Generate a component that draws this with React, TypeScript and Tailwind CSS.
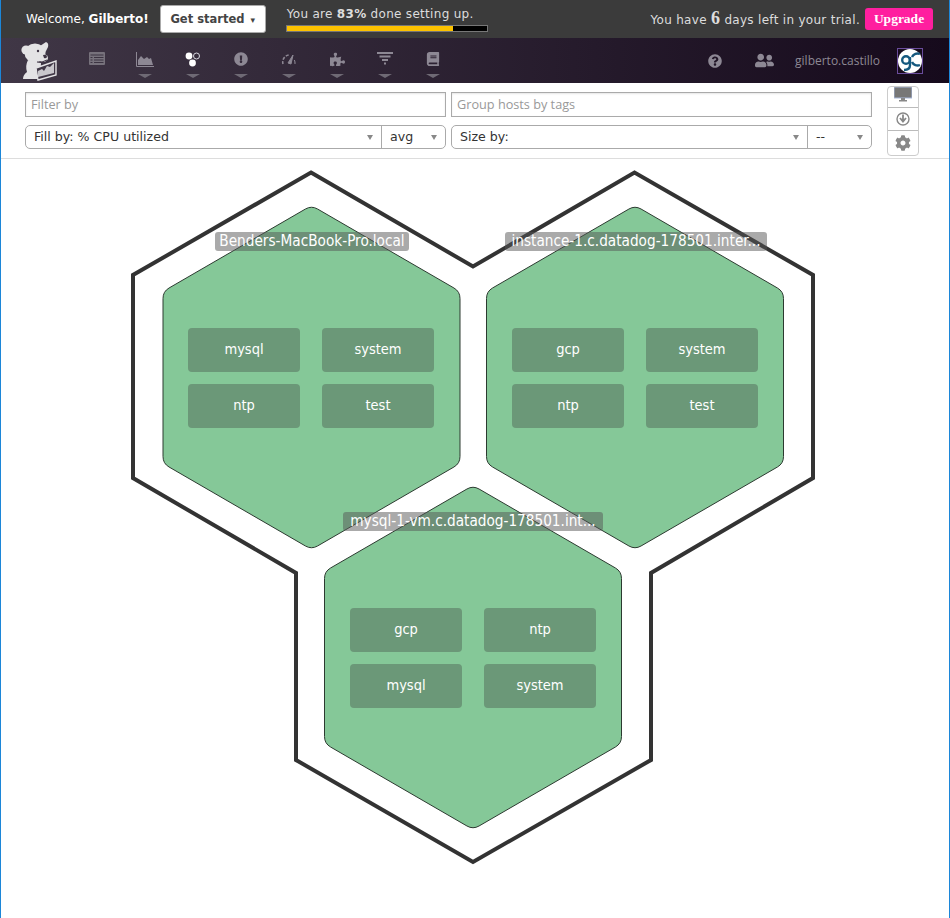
import { FaBook, FaCog, FaExclamationCircle, FaPuzzlePiece, FaQuestionCircle, FaUserFriends } from "react-icons/fa";
import type { ReactNode } from "react";

const hosts = [
  { label: "Benders-MacBook-Pro.local", labelClass: "left-[214px] top-[232px] w-[194px]", left: 188, top: 328, tags: ["mysql", "system", "ntp", "test"] },
  { label: "instance-1.c.datadog-178501.inter...", labelClass: "left-[504px] top-[232px] w-[262px]", left: 512, top: 328, tags: ["gcp", "system", "ntp", "test"] },
  { label: "mysql-1-vm.c.datadog-178501.int...", labelClass: "left-[342px] top-[512px] w-[260px]", left: 350, top: 608, tags: ["gcp", "ntp", "mysql", "system"] },
];

// hexagon with rounded corners, pointy side up
function hexPath(cx: number, top: number) {
  const w = 148.5;
  const s = 86;
  const pts = [
    [cx, top],
    [cx + w, top + s],
    [cx + w, top + 3 * s],
    [cx, top + 4 * s],
    [cx - w, top + 3 * s],
    [cx - w, top + s],
  ];
  const r = 7;
  const along = (a: number[], b: number[]) => {
    const d = Math.hypot(b[0] - a[0], b[1] - a[1]);
    return [a[0] + ((b[0] - a[0]) * r) / d, a[1] + ((b[1] - a[1]) * r) / d];
  };
  return (
    pts
      .map((p, i) => {
        const from = along(p, pts[(i + 5) % 6]);
        const to = along(p, pts[(i + 1) % 6]);
        return `${i === 0 ? "M" : "L"}${from[0]} ${from[1]} Q${p[0]} ${p[1]} ${to[0]} ${to[1]}`;
      })
      .join(" ") + " Z"
  );
}

function NavIcon({ children, arrow = true }: { children: ReactNode; arrow?: boolean }) {
  return (
    <div className="relative flex h-[45px] w-12 items-start justify-center pt-[14px] text-[#8d8894]">
      {children}
      {arrow && <span className="absolute left-[17px] top-[36px] h-0 w-0 border-x-[7px] border-t-[4px] border-x-transparent border-t-[#6f6a75]" />}
    </div>
  );
}

function SelectArrow() {
  return <span className="h-0 w-0 border-x-[3.5px] border-t-[5px] border-x-transparent border-t-[#888]" />;
}

function SelectRow({ label, value }: { label: string; value: string }) {
  return (
    <div className="flex h-6 flex-1 rounded-[5px] border border-[#aaa] text-[12.6px] text-[#333]">
      <div className="flex flex-1 items-center justify-between pl-2 pr-[8px]">
        <span>{label}</span>
        <SelectArrow />
      </div>
      <div className="flex w-[64px] items-center justify-between border-l border-[#aaa] pl-2 pr-[8px]">
        <span>{value}</span>
        <SelectArrow />
      </div>
    </div>
  );
}

export default function App() {
  return (
    <div className="relative h-[918px] w-[950px] overflow-hidden border-x border-[#1c86d8] bg-white font-['DejaVu_Sans',sans-serif]">
      {/* Trial bar */}
      <div className="flex h-[38px] items-center bg-[#3b3b3b] pl-[25px] pr-4 text-[#ddd]">
        <span className="text-[12px] text-white">Welcome, <b>Gilberto!</b></span>
        <button className="ml-[11px] h-7 w-[106px] rounded-[3px] border border-[#aaa] bg-white pt-px text-[11.5px] font-bold text-[#444]">
          Get started <span className="ml-0.5 text-[9px]">▾</span>
        </button>
        <div className="ml-5 flex w-[202px] flex-col">
          <span className="pl-px text-[12px] leading-[15px] tracking-[0.3px]">You are <b>83%</b> done setting up.</span>
          <div className="mt-[3px] h-[7px] border border-[#777] bg-black">
            <div className="h-full w-[83%] bg-[#fcc200]" />
          </div>
        </div>
        <div className="ml-auto flex items-center">
          <span className="text-[12px] tracking-[0.3px]">You have <span className="font-['Liberation_Serif',serif] text-[18px] font-bold leading-none">6</span> days left in your trial.</span>
          <button className="ml-[5px] h-[22px] w-[68px] rounded-[3px] bg-[#ff1f9f] font-['Liberation_Serif',serif] text-[13.5px] font-bold text-white">Upgrade</button>
        </div>
      </div>

      {/* Main nav */}
      <div className="flex h-[45px] items-start bg-gradient-to-r from-[#403746] to-[#160a1c] pl-[19px]">
        <svg className="mt-[3px] h-[40px] w-[37px] shrink-0" viewBox="0 0 37 40">
          <circle cx="6" cy="9" r="4.6" fill="#e4e3e5" />
          <ellipse cx="15" cy="12" rx="10.5" ry="9.5" fill="#e4e3e5" />
          <path d="M20 5 L26 1 Q29 2 28 6 L25 12 L20 9Z" fill="#e4e3e5" />
          <ellipse cx="23" cy="17" rx="5" ry="4" fill="#e4e3e5" />
          <path d="M8 19 L21 22 L20 38 L3 38 Q3 34 7 31 Q5 25 8 19Z" fill="#e4e3e5" />
          <path d="M16 27 L36 20 L36 34 L18 39Z" fill="#403746" stroke="#e4e3e5" strokeWidth="1.4" />
          <path d="M18 36 L18 30 L22 28 L24 30 L27 25 L30 26 L34 22 L34 32Z" fill="#c9c7cc" />
          <circle cx="18" cy="10" r="1.2" fill="#403746" />
          <path d="M23 14 Q27 13 27 16 Q26 18 24 17Z" fill="#403746" />
          <path d="M17 21 Q22 22 27 19" fill="none" stroke="#403746" strokeWidth="1" />
        </svg>
        <div className="ml-[16px] flex">
          <NavIcon arrow={false}>
            <svg width="16" height="13" viewBox="0 0 16 13"><rect width="16" height="13" rx="1" fill="#77727c" /><path d="M1.5 3h13M1.5 5.5h2M5 5.5h9.5M1.5 8h2M5 8h9.5M1.5 10.5h2M5 10.5h9.5" stroke="#3c3442" strokeWidth="1" /></svg>
          </NavIcon>
          <NavIcon>
            <svg width="18" height="15" viewBox="0 0 18 15"><path d="M.5 0v14.5H18" stroke="#8d8894" fill="none" /><path d="M2 13V8l3-4 3 3 3-2 2 2 2-1 2 7Z" fill="#8d8894" /></svg>
          </NavIcon>
          <NavIcon>
            <svg width="16" height="15" viewBox="0 0 16 15"><circle cx="4" cy="4" r="3.4" fill="#fff" /><circle cx="11.5" cy="4" r="3" fill="none" stroke="#d8d8e0" strokeWidth="1" /><circle cx="7.5" cy="11" r="3.4" fill="#fff" /></svg>
          </NavIcon>
          <NavIcon><FaExclamationCircle size={14} /></NavIcon>
          <NavIcon>
            <svg width="16" height="14" viewBox="0 0 16 14"><path d="M2 12A7 7 0 0 1 9 3" fill="none" stroke="#8d8894" strokeWidth="1.6" strokeDasharray="3 1.4" /><path d="M14 12a7 7 0 0 0-.6-4M7 11l5-8-2 9Z" fill="#8d8894" stroke="#8d8894" strokeWidth="1" /></svg>
          </NavIcon>
          <NavIcon><FaPuzzlePiece size={15} /></NavIcon>
          <NavIcon>
            <svg width="16" height="14" viewBox="0 0 16 14"><path d="M0 1h16M2.5 4.5h11M5 8h6M7 11.5h2" stroke="#8d8894" strokeWidth="1.8" /></svg>
          </NavIcon>
          <NavIcon><FaBook size={14} /></NavIcon>
        </div>
        <div className="ml-auto flex h-[45px] items-center text-[#8d8894]">
          <FaQuestionCircle size={14} />
          <FaUserFriends size={19} className="ml-[33px]" />
          <span className="ml-[21px] font-['Open_Sans',sans-serif] text-[12px]">gilberto.castillo</span>
          <div className="ml-[17px] mr-[26px] flex h-[26px] w-[26px] items-center justify-center border border-[#6a4c9c]">
            <svg width="24" height="24" viewBox="0 0 24 24">
              <circle cx="12" cy="12" r="12" fill="#fff" />
              <circle cx="8" cy="11" r="3.8" fill="none" stroke="#15597f" strokeWidth="2.4" />
              <path d="M12 8v8q0 5-6 5" fill="none" stroke="#15597f" strokeWidth="2.4" />
              <path d="M22 5a6 6 0 0 0-8 3M14 13a6 6 0 0 0 8 3" fill="none" stroke="#15597f" strokeWidth="2.4" />
            </svg>
          </div>
        </div>
      </div>

      {/* Filters */}
      <div className="flex h-[76px] border-b border-[#ddd] pl-[24px]">
        <div className="flex w-[847px] flex-col">
          <div className="mt-[9px] flex gap-[5px]">
            <div className="h-[25px] flex-1 border border-[#aaa] pl-[5px] font-['Open_Sans',sans-serif] text-[12.7px] leading-[23px] text-[#999] shadow-[inset_0_1px_2px_rgba(0,0,0,0.1)]">Filter by</div>
            <div className="h-[25px] flex-1 border border-[#aaa] pl-[5px] font-['Open_Sans',sans-serif] text-[12.7px] leading-[23px] text-[#999] shadow-[inset_0_1px_2px_rgba(0,0,0,0.1)]">Group hosts by tags</div>
          </div>
          <div className="mt-2 flex gap-[5px]">
            <SelectRow label="Fill by: % CPU utilized" value="avg" />
            <SelectRow label="Size by:" value="--" />
          </div>
        </div>
        <div className="ml-[15px] mt-[3px] flex h-[70px] w-8 flex-col rounded-[4px] border border-[#ccc] text-[#888]">
          <div className="flex h-[21px] items-start justify-center border-b border-[#bbb]">
            <svg width="18" height="15" viewBox="0 0 18 15"><rect width="18" height="11" fill="#777" stroke="#a9b9dc" strokeWidth="1" /><path d="M7 11h4v2h2v1.5H5V13h2Z" fill="#888" /></svg>
          </div>
          <div className="flex h-[23px] items-center justify-center border-b border-[#bbb]">
            <svg width="14" height="14" viewBox="0 0 14 14"><circle cx="7" cy="7" r="6" fill="none" stroke="#888" strokeWidth="1.4" /><path d="M7 2.5v6M4 6l3 3.5L10 6" fill="none" stroke="#888" strokeWidth="1.8" /></svg>
          </div>
          <div className="flex flex-1 items-center justify-center"><FaCog size={16} /></div>
        </div>
      </div>

      {/* Host map */}
      <svg className="absolute left-[-1px] top-0 h-[918px] w-[950px]" viewBox="0 0 950 918">
        <path d="M311 172.5 L473 266.5 L634.5 172.5 L813 275 L813 478 L651 573 L651 760 L473 862 L296 760 L296 573 L133 478 L133 275 Z" fill="#fff" stroke="#333" strokeWidth="4" strokeLinejoin="miter" />
        <path d={hexPath(311.5, 205.5)} fill="#85c898" stroke="#2c3a30" strokeWidth="1" />
        <path d={hexPath(635, 205.5)} fill="#85c898" stroke="#2c3a30" strokeWidth="1" />
        <path d={hexPath(473, 485.5)} fill="#85c898" stroke="#2c3a30" strokeWidth="1" />
      </svg>
      {hosts.map((host) => (
        <div key={host.label}>
          <div className="absolute grid grid-cols-[112px_112px] gap-x-[22px] gap-y-3 font-stretch-condensed" style={{ left: host.left - 1, top: host.top }}>
            {host.tags.map((tag) => (
              <div key={tag} className="flex h-[44px] items-center justify-center rounded-[4px] bg-[#6b9878] text-[14.5px] text-white">{tag}</div>
            ))}
          </div>
          <div className={`absolute h-[19px] truncate rounded-[3px] bg-[rgba(85,85,85,0.5)] px-1 text-center text-[15.2px] leading-[19px] text-white font-stretch-condensed ${host.labelClass}`}>{host.label}</div>
        </div>
      ))}
    </div>
  );
}
